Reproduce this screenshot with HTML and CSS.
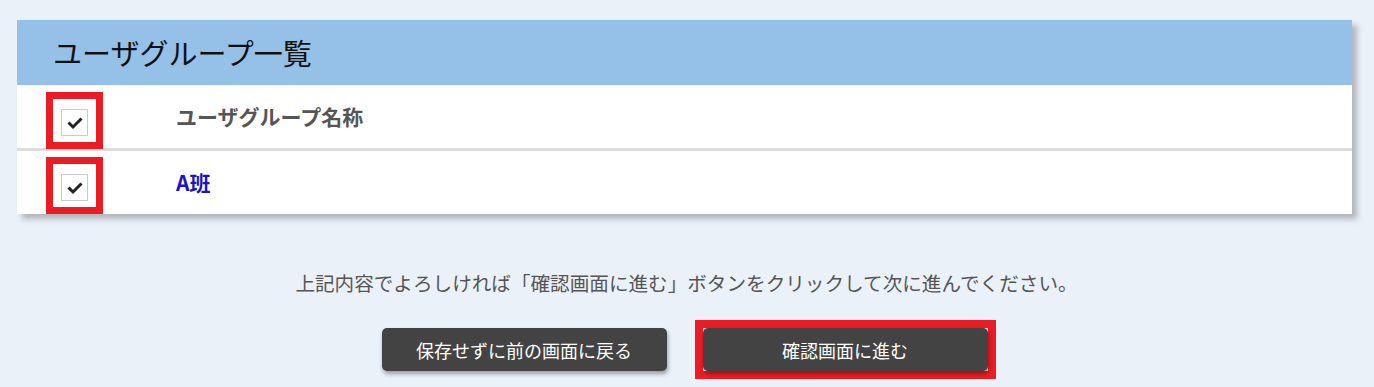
FILE: index.html
```html
<!DOCTYPE html>
<html lang="ja">

<head>
  <meta charset="UTF-8" />
  <meta name="viewport" content="width=device-width, initial-scale=1.0" />
  <title>ユーザグループ一覧</title>
  <link rel="stylesheet" href="styles.css">
</head>

<body>
  <div class="panel">
    <h2 class="panel-title">ユーザグループ一覧</h2>
    <div class="row head-row">
      <div class="check-cell">
        <span class="mark">
          <span class="checkbox">
            <svg width="18" height="14" viewBox="0 0 18 14"><path d="M2.5 6.5 L7 11 L15.5 2.5" fill="none" stroke="#222" stroke-width="3"/></svg>
          </span>
        </span>
      </div>
      <div class="name-cell">ユーザグループ名称</div>
    </div>
    <div class="row">
      <div class="check-cell">
        <span class="mark">
          <span class="checkbox">
            <svg width="18" height="14" viewBox="0 0 18 14"><path d="M2.5 6.5 L7 11 L15.5 2.5" fill="none" stroke="#222" stroke-width="3"/></svg>
          </span>
        </span>
      </div>
      <div class="name-cell"><a href="#" class="group-link">A班</a></div>
    </div>
  </div>

  <p class="message">上記内容でよろしければ「確認画面に進む」ボタンをクリックして次に進んでください。</p>

  <div class="actions">
    <button class="btn">保存せずに前の画面に戻る</button>
    <span class="mark-btn"><button class="btn">確認画面に進む</button></span>
  </div>
</body>

</html>
```

FILE: styles.css
```css
body {
  font-family: "Noto Sans CJK JP", "Liberation Sans", sans-serif;
  background: #ebf1f8;
  margin: 0;
  padding: 20px 22px 0 17px;
  color: #555;
}

.panel {
  background: #fff;
  box-shadow: 5px 5px 6px rgba(0, 0, 0, 0.25);
}

.panel-title {
  margin: 0;
  height: 65px;
  display: flex;
  align-items: center;
  padding-left: 36px;
  background: #95c1e8;
  color: #111;
  font-size: 29px;
  font-weight: normal;
  line-height: 1;
}

.row {
  display: flex;
  align-items: center;
  height: 63px;
}

.head-row {
  border-bottom: 3px solid #dcdcdc;
}

.check-cell {
  width: 159px;
  height: 100%;
  display: flex;
  padding-left: 29px;
  box-sizing: border-box;
}

.mark {
  align-self: flex-end;
  display: flex;
  align-items: center;
  justify-content: center;
  width: 57px;
  height: 57px;
  box-sizing: border-box;
  border: 7px solid #ec1c24;
  margin-bottom: -1px;
}

.row + .row .mark {
  margin-bottom: 0;
}

.checkbox {
  width: 27px;
  height: 27px;
  box-sizing: border-box;
  border: 1px solid #ccc;
  background: #fff;
  display: flex;
  align-items: center;
  justify-content: center;
  margin-top: 4px;
}

.name-cell {
  font-size: 21px;
  font-weight: bold;
  line-height: 1;
}

.group-link {
  color: #1a14c8;
  text-decoration: none;
}

.message {
  margin: 59px 0 0;
  text-align: center;
  font-size: 19.6px;
  line-height: 20px;
  color: #555;
  padding-left: 4px;
}

.actions {
  display: flex;
  justify-content: center;
  align-items: center;
  gap: 28px;
  margin-top: 27px;
  padding-left: 8px;
}

.btn {
  width: 285px;
  height: 43px;
  border: none;
  border-radius: 5px;
  background: #434343;
  color: #fff;
  font-family: inherit;
  font-size: 18px;
  box-shadow: 1px 3px 4px rgba(0, 0, 0, 0.35);
  cursor: pointer;
}

.mark-btn {
  display: flex;
  border: 8px solid #ec1c24;
}
```
